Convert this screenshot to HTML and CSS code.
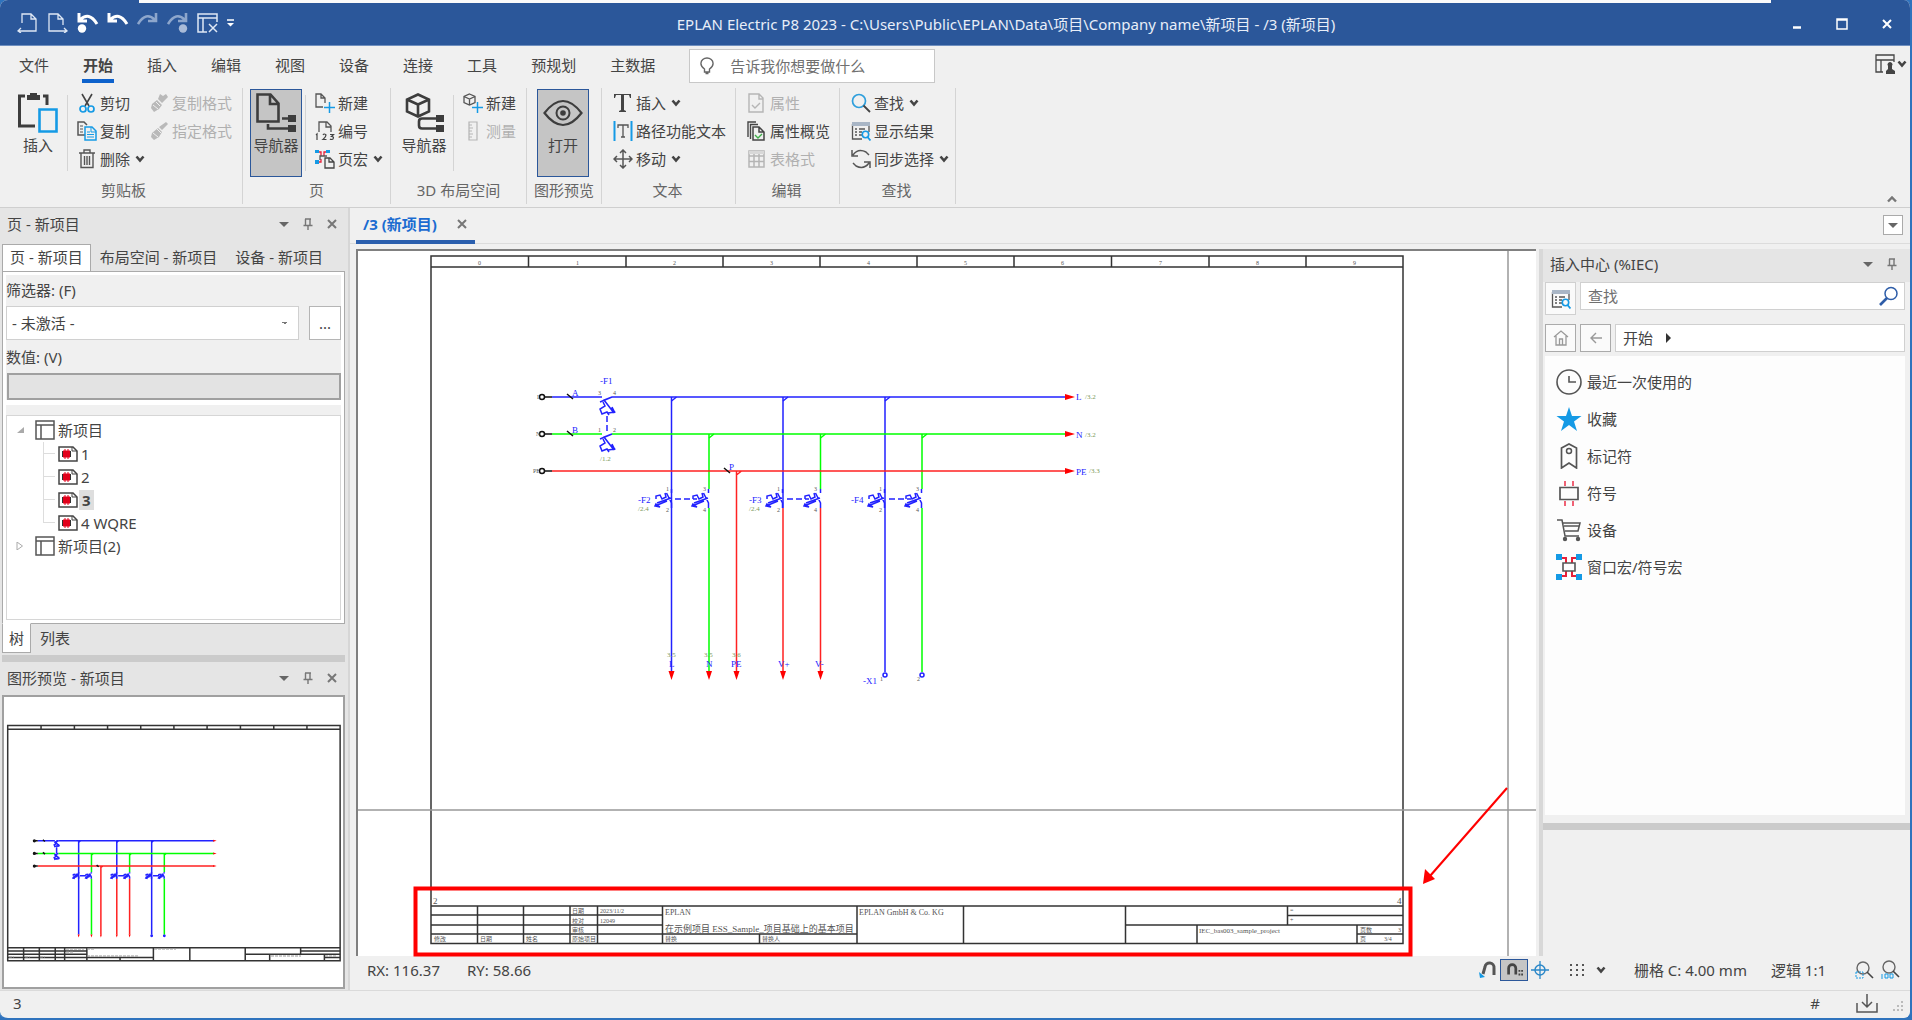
FILE: index.html
```html
<!DOCTYPE html>
<html lang="zh-CN">
<head>
<meta charset="utf-8">
<title>EPLAN Electric P8 2023</title>
<link rel="stylesheet" href="styles.css">
</head>
<body>
<svg class="defs" aria-hidden="true">
  <symbol id="i-chev" viewBox="0 0 10 10"><path d="M1.500 2.500L5 6.500 8.500 2.500" fill="none" stroke="#444" stroke-width="2.600"/></symbol>
  <symbol id="i-down" viewBox="0 0 12 12"><path d="M1 4h10L6 9z" fill="#666"/></symbol>
  <symbol id="i-pin" viewBox="0 0 12 12"><path d="M3.500 1v6M3 1h6M8 1v6M1.500 7.500h9M6 8v4" fill="none" stroke="#777" stroke-width="1.400"/></symbol>
  <symbol id="i-close" viewBox="0 0 12 12"><path d="M2 2l8 8M10 2l-8 8" fill="none" stroke="#777" stroke-width="2"/></symbol>
  <symbol id="i-layout" viewBox="0 0 20 20"><path d="M1 1h18v18H1zM1 5h18M6 5v14" fill="none" stroke="#555" stroke-width="1.500"/></symbol>
  <symbol id="i-page" viewBox="0 0 20 16"><path d="M1 1h14l4 4v10H1z" fill="#fff" stroke="#444" stroke-width="1.500"/><path d="M14 1v4h5" fill="none" stroke="#444"/><path d="M5 5h7v6H5z" fill="#e2001a" stroke="#e2001a"/><path d="M4.500 5v6M12.500 5v6" stroke="#333"/><path d="M7 3v10M10 3v10" stroke="#e2001a"/></symbol>
  <symbol id="i-cut" viewBox="0 0 20 20"><path d="M5 1l7 12M15 1L8 13" stroke="#444" stroke-width="1.600" fill="none"/><circle cx="6" cy="16" r="3" fill="none" stroke="#159ae5" stroke-width="1.700"/><circle cx="14" cy="16" r="3" fill="none" stroke="#159ae5" stroke-width="1.700"/></symbol>
  <symbol id="i-copy" viewBox="0 0 20 20"><path d="M8 14H1V1h6l3 3" fill="none" stroke="#555" stroke-width="1.500"/><path d="M3 5h3M3 8h3M3 11h3" stroke="#555"/><path d="M8 6h7l4 4v9H8z" fill="#f0f0f0" stroke="#159ae5" stroke-width="1.500"/><path d="M14 6v5h5M10 11h3M10 13.500h7M10 16h7" fill="none" stroke="#159ae5"/></symbol>
  <symbol id="i-trash" viewBox="0 0 20 20"><path d="M2 4h16M7 4V1h6v3M4 4v14.500h12V4M7.500 7v9M10 7v9M12.500 7v9" fill="none" stroke="#555" stroke-width="1.400"/></symbol>
  <symbol id="i-brush" viewBox="0 0 20 20"><path d="M17 1l2 2-6 6-3-3zM9 7l4 4-3 5-5 3-3-3 1-4z" fill="#b9b9b9"/><path d="M4 12l5 4M8 8l4 4" stroke="#f0f0f0"/></symbol>
  <symbol id="i-brush2" viewBox="0 0 20 20"><path d="M11 1l3 2 3-2 2 3-6 6-4-4zM8 7l5 5-3 4-5 3-3-4 1-4z" fill="#b9b9b9"/><path d="M4 12l5 4M7 9l4 4" stroke="#f0f0f0"/></symbol>
  <symbol id="i-newpage" viewBox="0 0 20 20"><path d="M8 14H1V1h5l4 4v5M6 1v4h4" fill="none" stroke="#555" stroke-width="1.300"/><path d="M14.500 9v11M9 14.500h11" stroke="#159ae5" stroke-width="1.500"/></symbol>
  <symbol id="i-num" viewBox="0 0 20 20"><path d="M4 11V1h8l4 4v6M11 1v5h5" fill="none" stroke="#555" stroke-width="1.300"/><path d="M1 14l1-1v6M8 14q1-2 3 0 0 2-3 4.500h3.500M15 13.500h3.500l-2 2q3 0 1.500 2.500-2 1-3 0" fill="none" stroke="#444" stroke-width="1.200"/></symbol>
  <symbol id="i-pmacro" viewBox="0 0 20 20"><path d="M0 1h4v3H0zM11 1h4v3h-4zM0 11h4v4H0z" fill="#159ae5"/><path d="M4 3h2v4M11 3H9v4M4 13h2v-3" fill="none" stroke="#e8203a" stroke-width="1.300"/><path d="M5 11V7h7" fill="none" stroke="#555" stroke-width="1.300"/><path d="M10 19V9h5l4 4v6zM14 9v4h5" fill="#f0f0f0" stroke="#444" stroke-width="1.300"/></symbol>
  <symbol id="i-cube" viewBox="0 0 20 20"><path d="M6.500 1L12 3.500v6L6.500 12 1 9.500v-6zM1 3.500l5.500 2.500L12 3.500M6.500 6v6" fill="none" stroke="#555" stroke-width="1.300"/><path d="M14.500 9v11M9 14.500h11" stroke="#159ae5" stroke-width="1.500"/></symbol>
  <symbol id="i-ruler" viewBox="0 0 20 20"><path d="M6 1h8v18H6zM6 4h3M6 7h4M6 10h3M6 13h4M6 16h3" fill="none" stroke="#b5b5b5" stroke-width="1.200"/></symbol>
  <symbol id="i-text" viewBox="0 0 20 20"><path d="M1 5V1h17v4h-1l-1-3h-5v15l2 1v1H6v-1l2-1V2H3L2 5z" fill="#444"/></symbol>
  <symbol id="i-path" viewBox="0 0 20 20"><path d="M1.500 0v20M18.500 0v20" stroke="#159ae5" stroke-width="2"/><path d="M5 7V4h10v3M10 4v12M8 16h4" fill="none" stroke="#555" stroke-width="1.300"/></symbol>
  <symbol id="i-move" viewBox="0 0 20 20"><path d="M10 1v18M1 10h18M7 4l3-3 3 3M7 16l3 3 3-3M4 7l-3 3 3 3M16 7l3 3-3 3" fill="none" stroke="#555" stroke-width="1.500"/></symbol>
  <symbol id="i-prop" viewBox="0 0 20 20"><path d="M2 1h10l4 4v14H2zM12 1v5h4M5 12l3 3 5-5" fill="none" stroke="#b5b5b5" stroke-width="1.400"/></symbol>
  <symbol id="i-props" viewBox="0 0 20 20"><path d="M1 16V1h8M3.500 18V3.500H11" fill="none" stroke="#444" stroke-width="1.400"/><path d="M6 19V6h6l5 5v8zM12 6v5h5" fill="#f0f0f0" stroke="#444" stroke-width="1.500"/><path d="M8 14l3 3 4-4" fill="none" stroke="#3fae49" stroke-width="1.400"/></symbol>
  <symbol id="i-table" viewBox="0 0 20 20"><path d="M2 2h15v16H2zM2 7h15M2 12.500h15M7 5v13M12 5v13" fill="none" stroke="#b5b5b5" stroke-width="1.500"/><path d="M2 2h15v3H2z" fill="#d8d8d8"/></symbol>
  <symbol id="i-find" viewBox="0 0 20 20"><circle cx="8" cy="8" r="6.500" fill="none" stroke="#2f9fdc" stroke-width="1.700"/><path d="M12.500 12.500L19 19" stroke="#444" stroke-width="1.800"/></symbol>
  <symbol id="i-result" viewBox="0 0 20 20"><path d="M1.500 3v15H11M18 3v8" fill="none" stroke="#555" stroke-width="1.300"/><path d="M1 1h18v4H1z" fill="#a9b6c6"/><path d="M4 8h2M4 11h2M4 14h2M8 8h6M8 11h3M8 14h3" stroke="#555" stroke-width="1.300"/><circle cx="14.500" cy="13.500" r="3.200" fill="none" stroke="#159ae5" stroke-width="1.600"/><path d="M16.500 16l3 3.500" stroke="#159ae5" stroke-width="1.800"/></symbol>
  <symbol id="i-sync" viewBox="0 0 20 20"><path d="M1 1v6h6M2 6q5-7 13-3l3 3M19 19v-6h-6M18 14q-5 7-13 3l-3-3" fill="none" stroke="#555" stroke-width="1.500"/></symbol>
</svg>

<div class="window">
  <header class="titlebar">
    <div class="quick">
      <button type="button" aria-label="上一页"><svg width="22" height="20" viewBox="0 0 22 20"><path d="M5 10V1h9l5 5v12H1M4 15l-3 3 3 2M14 1v5h5" fill="none" stroke="#dfe8f5" stroke-width="1.300"/></svg></button>
      <button type="button" aria-label="下一页"><svg width="22" height="20" viewBox="0 0 22 20"><path d="M16 12V6l-5-5H2v17h18M17 15l3 3-3 2M11 1v5h5" fill="none" stroke="#dfe8f5" stroke-width="1.300"/></svg></button>
      <button type="button" aria-label="撤销列表"><svg width="22" height="20" viewBox="0 0 22 20"><path d="M2 0v8h8M3 7q9-9 17 4" fill="none" stroke="#fff" stroke-width="3"/><circle cx="5" cy="15.500" r="4.200" fill="#fff"/></svg></button>
      <button type="button" aria-label="撤销"><svg width="22" height="20" viewBox="0 0 22 20"><path d="M2 0v8h8M3 7q9-9 17 4" fill="none" stroke="#fff" stroke-width="3"/></svg></button>
      <button type="button" aria-label="恢复" disabled><svg width="22" height="20" viewBox="0 0 22 20"><path d="M19 0v8h-8M18 7Q9-2 1 11" fill="none" stroke="#8da6cc" stroke-width="2.600"/></svg></button>
      <button type="button" aria-label="恢复列表" disabled><svg width="22" height="20" viewBox="0 0 22 20"><path d="M19 0v8h-8M18 7Q9-2 1 11" fill="none" stroke="#8da6cc" stroke-width="2.600"/><circle cx="16" cy="15.500" r="4.200" fill="#a9bbd8"/></svg></button>
      <button type="button" aria-label="重置布局"><svg width="22" height="20" viewBox="0 0 22 20"><path d="M20 9V1H1v18h9M1 5h19M6 5v14M12 11l8 8M20 11l-8 8" fill="none" stroke="#dfe8f5" stroke-width="1.500"/></svg></button>
      <button type="button" aria-label="更多"><svg width="8" height="8" viewBox="0 0 8 8"><path d="M0 1h7" stroke="#fff" stroke-width="1.500"/><path d="M0 4h7L3.500 7.500z" fill="#fff"/></svg></button>
    </div>
    <h1>EPLAN Electric P8 2023 - C:\Users\Public\EPLAN\Data\项目\Company name\新项目 - /3 (新项目)</h1>
    <div class="winbtns">
      <button type="button" aria-label="最小化"><svg width="12" height="12" viewBox="0 0 12 12"><path d="M2 9.500h8" stroke="#fff" stroke-width="2.500"/></svg></button>
      <button type="button" aria-label="最大化"><svg width="12" height="12" viewBox="0 0 12 12"><path d="M1 1h10v10H1zM1 2h10" fill="none" stroke="#fff" stroke-width="1.500"/></svg></button>
      <button type="button" aria-label="关闭"><svg width="12" height="12" viewBox="0 0 12 12"><path d="M2 2l8 8M10 2l-8 8" stroke="#fff" stroke-width="2"/></svg></button>
    </div>
  </header>

  <nav class="menu">
    <button type="button"><span>文件</span></button>
    <button type="button" class="on"><span>开始</span></button>
    <button type="button"><span>插入</span></button>
    <button type="button"><span>编辑</span></button>
    <button type="button"><span>视图</span></button>
    <button type="button"><span>设备</span></button>
    <button type="button"><span>连接</span></button>
    <button type="button"><span>工具</span></button>
    <button type="button"><span>预规划</span></button>
    <button type="button"><span>主数据</span></button>
    <label class="tell">
      <svg width="14" height="18" viewBox="0 0 14 18"><path d="M4.500 12q-4-3-3.500-6a6 5 0 0 1 12 0q.5 3-3.500 6v3h-5zM5.500 16.500h3" fill="none" stroke="#666" stroke-width="1.400"/></svg>
      <input type="text" placeholder="告诉我你想要做什么" aria-label="告诉我你想要做什么">
    </label>
    <button type="button" class="profile" aria-label="工作区域"><svg width="20" height="20" viewBox="0 0 20 20"><path d="M19 8V1H1v17h7M1 6h18M6 6v12" fill="none" stroke="#444" stroke-width="1.300"/><path d="M13 15v-3a2.500 2.500 0 1 1 4 0v3l3 2v3h-9v-3z" fill="#444"/></svg><svg width="10" height="10"><use href="#i-chev"/></svg></button>
  </nav>

  <section class="ribbon">
    <div class="group g-clip">
      <div class="tools">
        <button type="button" class="big"><svg width="40" height="40" viewBox="0 0 40 40"><path d="M7 3H1.500v30H17M25 3h4v9" fill="none" stroke="#3d3d3d" stroke-width="3"/><path d="M9 2h3V0h7v2h3v5H9z" fill="#3d3d3d"/><path d="M21.500 16.500h17v22h-17z" fill="#f0f0f0" stroke="#159ae5" stroke-width="2.600"/></svg>插入</button>
        <i class="sep"></i>
        <div class="col">
          <button type="button"><svg><use href="#i-cut"/></svg>剪切</button>
          <button type="button"><svg><use href="#i-copy"/></svg>复制</button>
          <button type="button"><svg><use href="#i-trash"/></svg>删除<svg class="c"><use href="#i-chev"/></svg></button>
        </div>
        <div class="col">
          <button type="button" disabled><svg><use href="#i-brush2"/></svg>复制格式</button>
          <button type="button" disabled><svg><use href="#i-brush"/></svg>指定格式</button>
        </div>
      </div>
      <div class="name">剪贴板</div>
    </div>
    <div class="group g-page">
      <div class="tools">
        <button type="button" class="big on"><svg width="40" height="40" viewBox="0 0 40 40"><path d="M1.500 1.500h13l8 9v18h-21zM14 1v10h9M26 25.500h8M12 31v4.500h20" fill="none" stroke="#3d3d3d" stroke-width="2.600"/><path d="M32 22h8v7h-8zM32 32h8v7h-8z" fill="#3d3d3d"/></svg>导航器</button>
        <i class="sep"></i>
        <div class="col">
          <button type="button"><svg><use href="#i-newpage"/></svg>新建</button>
          <button type="button"><svg><use href="#i-num"/></svg>编号</button>
          <button type="button"><svg><use href="#i-pmacro"/></svg>页宏<svg class="c"><use href="#i-chev"/></svg></button>
        </div>
      </div>
      <div class="name">页</div>
    </div>
    <div class="group g-3d">
      <div class="tools">
        <button type="button" class="big"><svg width="40" height="40" viewBox="0 0 40 40"><path d="M14 1.500l11 5v12l-11 5-11-5v-12zM3 6.500l11 5 11-5M14 11v12M32 25.500H18q-3 0-3 3v4q0 3 3 3h14" fill="none" stroke="#3d3d3d" stroke-width="2.600"/><path d="M32 22h8v7h-8zM32 32h8v7h-8z" fill="#3d3d3d"/></svg>导航器</button>
        <i class="sep"></i>
        <div class="col">
          <button type="button"><svg><use href="#i-cube"/></svg>新建</button>
          <button type="button" disabled><svg><use href="#i-ruler"/></svg>测量</button>
        </div>
      </div>
      <div class="name">3D 布局空间</div>
    </div>
    <div class="group g-prev">
      <div class="tools">
        <button type="button" class="big on"><svg width="40" height="40" viewBox="0 0 40 40"><path d="M1.500 20Q20-4 38.500 20 20 44 1.500 20z" fill="none" stroke="#3d3d3d" stroke-width="2.200"/><circle cx="20" cy="20" r="6.500" fill="none" stroke="#3d3d3d" stroke-width="2"/><circle cx="20" cy="20" r="2.800" fill="#3d3d3d"/></svg>打开</button>
      </div>
      <div class="name">图形预览</div>
    </div>
    <div class="group g-text">
      <div class="tools">
        <div class="col">
          <button type="button"><svg><use href="#i-text"/></svg>插入<svg class="c"><use href="#i-chev"/></svg></button>
          <button type="button"><svg><use href="#i-path"/></svg>路径功能文本</button>
          <button type="button"><svg><use href="#i-move"/></svg>移动<svg class="c"><use href="#i-chev"/></svg></button>
        </div>
      </div>
      <div class="name">文本</div>
    </div>
    <div class="group g-edit">
      <div class="tools">
        <div class="col">
          <button type="button" disabled><svg><use href="#i-prop"/></svg>属性</button>
          <button type="button"><svg><use href="#i-props"/></svg>属性概览</button>
          <button type="button" disabled><svg><use href="#i-table"/></svg>表格式</button>
        </div>
      </div>
      <div class="name">编辑</div>
    </div>
    <div class="group g-find">
      <div class="tools">
        <div class="col">
          <button type="button"><svg><use href="#i-find"/></svg>查找<svg class="c"><use href="#i-chev"/></svg></button>
          <button type="button"><svg><use href="#i-result"/></svg>显示结果</button>
          <button type="button"><svg><use href="#i-sync"/></svg>同步选择<svg class="c"><use href="#i-chev"/></svg></button>
        </div>
      </div>
      <div class="name">查找</div>
    </div>
    <button type="button" class="fold" aria-label="折叠功能区"><svg width="10" height="10" viewBox="0 0 10 10"><path d="M1 7.500L5 3.500 9 7.500" fill="none" stroke="#777" stroke-width="2.400"/></svg></button>
  </section>

  <main class="main">
    <aside class="left">
      <div class="ptitle"><h2>页 - 新项目</h2><button type="button" aria-label="菜单"><svg><use href="#i-down"/></svg></button><button type="button" aria-label="固定"><svg><use href="#i-pin"/></svg></button><button type="button" aria-label="关闭"><svg><use href="#i-close"/></svg></button></div>
      <div class="ptabs"><button type="button" class="on">页 - 新项目</button><button type="button">布局空间 - 新项目</button><button type="button">设备 - 新项目</button></div>
      <div class="pbody">
        <div class="filter">
          <label for="filter">筛选器: (F)</label>
          <div class="frow">
            <select id="filter"><option>- 未激活 -</option></select>
            <button type="button">...</button>
          </div>
          <label for="value">数值: (V)</label>
          <input id="value" type="text" readonly>
        </div>
        <div class="band"></div>
        <ul class="tree">
          <li class="proj"><svg class="ex" viewBox="0 0 8 8"><path d="M8 1v6H1z" fill="#aaa"/></svg><svg class="ic"><use href="#i-layout"/></svg><span>新项目</span></li>
          <li class="page"><svg class="ic"><use href="#i-page"/></svg><span>1</span></li>
          <li class="page"><svg class="ic"><use href="#i-page"/></svg><span>2</span></li>
          <li class="page"><svg class="ic"><use href="#i-page"/></svg><span class="cur">3</span></li>
          <li class="page last"><svg class="ic"><use href="#i-page"/></svg><span>4 WQRE</span></li>
          <li class="proj"><svg class="ex" viewBox="0 0 8 8"><path d="M1 0l5.500 4L1 8z" fill="none" stroke="#aaa"/></svg><svg class="ic"><use href="#i-layout"/></svg><span>新项目(2)</span></li>
        </ul>
      </div>
      <div class="btabs"><button type="button" class="on">树</button><button type="button">列表</button></div>
      <div class="split"></div>
      <div class="ptitle"><h2>图形预览 - 新项目</h2><button type="button" aria-label="菜单"><svg><use href="#i-down"/></svg></button><button type="button" aria-label="固定"><svg><use href="#i-pin"/></svg></button><button type="button" aria-label="关闭"><svg><use href="#i-close"/></svg></button></div>
      <div class="preview">
        <svg viewBox="5 698 339 290" preserveAspectRatio="xMidYMid meet">
          <use href="#sheet" transform="translate(-138.700 639) scale(.342)"/>
          <use href="#circuit" transform="translate(-150 706) scale(.342)"/>
          <path d="M67 950h18M67 953h8M88 950h8M88 957h52M155 950h22M272 957h30M326 957h12M10 958h5M26 958h5M41 958h5" stroke="#999" stroke-width="1" stroke-dasharray="3 1"/>
        </svg>
      </div>
    </aside>

    <section class="work">
      <div class="doctabs">
        <div class="doctab"><b>/3 (新项目)</b><button type="button" aria-label="关闭"><svg width="12" height="12"><use href="#i-close"/></svg></button></div>
        <button type="button" class="list" aria-label="页列表"><svg width="12" height="12"><use href="#i-down"/></svg></button>
      </div>
      <div class="desk">
        <div class="canvas">
          <svg viewBox="358 251 1178 705" preserveAspectRatio="xMidYMid meet">
            <g id="sheet" class="frame">
              <path d="M431 256h972v687.500H431zM431 267h972M528.500 256v11M626 256v11M723 256v11M820 256v11M917 256v11M1014 256v11M1111.500 256v11M1209 256v11M1306 256v11"/>
              <path d="M431 906h972M431 915h231.500M431 925h231.500M431 934h426M477.500 906v37.500M523.500 906v37.500M570 906v37.500M597.500 906v37.500M662.500 906v37.500M759.500 934v9.500M857 906v37.500M963.500 906v37.500M1125.500 906v37.500M1125.500 925h277.500M1287.500 906v19M1287.500 915.500h115.500M1197 925v18.500M1357 925v18.500M1357 934h46"/>
            </g>
            <g id="circuit">
              <g class="wire blue"><path d="M552 397h50M612 397h455M671.500 397v274M783 397v111M885 397v275M885 504v4"/><path d="M671.500 401l5-4M783 401l5-4M885 401l5-4"/></g>
              <g class="wire green"><path d="M552 434h50M612 434h455M709 434v55M820.500 434v55M922 434v55M709 508v163M922 508v164"/><path d="M709 438l5-4M820.500 438l5-4M922 438l5-4"/></g>
              <g class="wire red"><path d="M552 471h515M736.500 471v200M783 508v163M820.500 508v163M736.500 475l5-4"/></g>
              <g class="wire black"><path d="M544 397h8M544 434h8M544 471h8M567 394l6 5M567 431l6 5M724 468l6 5"/><circle cx="542" cy="397" r="2.500"/><circle cx="542" cy="434" r="2.500"/><circle cx="542" cy="471" r="2.500"/></g>
              <g class="wire blue">
                <path id="mcb" d="M600 402l12-5M612 397l-8 3 10 13M603 402l2 4-5 3 2 5 5-2 2 3M615 413l-3-6M608 413l7-1M611 408l4 4"/>
                <use href="#mcb" y="37"/>
                <path d="M607 416v17M675 499h22M787 499h22M889 499h22" stroke-dasharray="6 3"/>
                <g id="brk"><path d="M671.500 489v4M671.500 508v-5l-5-10M657 503l14-5M655 506l12-5M656 499v-3l4-1 2 4 4-2-1-4M656 504l4 3-5-1z"/></g>
                <use href="#brk" x="37"/><use href="#brk" x="111"/><use href="#brk" x="149"/><use href="#brk" x="213"/><use href="#brk" x="250"/>
                <circle cx="885" cy="675" r="2"/><circle cx="922" cy="675" r="2"/>
              </g>
              <path class="tip" d="M1065 394l10 3-10 3zM1065 431l10 3-10 3zM1065 468l10 3-10 3zM668.500 671l3 9 3-9zM706 671l3 9 3-9zM733.500 671l3 9 3-9zM780 671l3 9 3-9zM817.500 671l3 9 3-9z"/>
            </g>
            <g class="t6 gray">
              <text x="478" y="265">0</text><text x="576" y="265">1</text><text x="673" y="265">2</text><text x="770" y="265">3</text><text x="867" y="265">4</text><text x="964" y="265">5</text><text x="1061" y="265">6</text><text x="1159" y="265">7</text><text x="1256" y="265">8</text><text x="1353" y="265">9</text>
              <text x="537" y="399">L</text><text x="536" y="436">N</text><text x="533" y="473">PE</text>
              <text x="598" y="395">3</text><text x="613" y="395">4</text><text x="598" y="432">1</text><text x="613" y="432">2</text>
              <text x="666" y="491">1</text><text x="666" y="512">2</text><text x="703" y="491">3</text><text x="703" y="512">4</text><text x="777" y="491">1</text><text x="777" y="512">2</text><text x="814" y="491">3</text><text x="814" y="512">4</text><text x="879" y="491">1</text><text x="879" y="512">2</text><text x="916" y="491">3</text><text x="916" y="512">4</text>
              <text x="880" y="681">1</text><text x="917" y="681">2</text>
              <text x="434" y="941">修改</text><text x="480" y="941">日期</text><text x="526" y="941">姓名</text><text x="572" y="941">原始项目</text><text x="572" y="913">日期</text><text x="572" y="923">校对</text><text x="572" y="932">审核</text>
              <text x="600" y="913">2023/11/2</text><text x="600" y="923">12049</text><text x="665" y="941">替换</text><text x="762" y="941">替换人</text>
              <text x="1290" y="912">=</text><text x="1290" y="922">+</text><text x="1360" y="932">页数</text><text x="1398" y="932">3</text><text x="1360" y="941">页</text><text x="1384" y="941">3/4</text>
            </g>
            <g class="t7 gray"><text x="1199" y="933">IEC_bas003_sample_project</text></g>
            <g class="t9 gray"><text x="433" y="904">2</text><text x="1397" y="904">4</text><text x="665" y="932">在示例项目 ESS_Sample_项目基础上的基本项目</text></g>
            <g class="t8 gray"><text x="665" y="915">EPLAN</text><text x="859" y="915">EPLAN GmbH &amp; Co. KG</text></g>
            <g class="t9 lbl"><text x="600" y="384">-F1</text><text x="572" y="396">A</text><text x="572" y="433">B</text><text x="729" y="470">P</text><text x="638" y="503">-F2</text><text x="749" y="503">-F3</text><text x="851" y="503">-F4</text><text x="863" y="684">-X1</text><text x="669" y="667">L</text><text x="706" y="667">N</text><text x="731" y="667">PE</text><text x="778" y="667">V+</text><text x="815" y="667">V-</text><text x="1076" y="400">L</text><text x="1076" y="438">N</text><text x="1076" y="475">PE</text></g>
            <g class="t7 ref"><text x="600" y="461">/1.2</text><text x="638" y="511">/2.4</text><text x="749" y="511">/2.4</text><text x="667" y="657">3.5</text><text x="704" y="657">3.5</text><text x="732" y="657">3.6</text><text x="1085" y="399">/3.2</text><text x="1085" y="437">/3.2</text><text x="1089" y="473">/3.3</text></g>
            <path class="cross" d="M358 810h1178M1508 251v705"/>
            <path d="M1507 788L1430 876" stroke="#f00" stroke-width="2"/><path d="M1423 884l2-15 10 10z" fill="#f00"/>
            <path d="M415.500 888.500h995v66h-995z" fill="none" stroke="#f00" stroke-width="4"/>
          </svg>
        </div>
        <aside class="center">
          <div class="ptitle"><h2>插入中心 (%IEC)</h2><button type="button" aria-label="菜单"><svg><use href="#i-down"/></svg></button><button type="button" aria-label="固定"><svg><use href="#i-pin"/></svg></button></div>
          <div class="srow">
            <button type="button" class="view" aria-label="显示结果"><svg width="20" height="20"><use href="#i-result"/></svg></button>
            <label class="find"><input type="text" placeholder="查找" aria-label="查找"><svg width="20" height="20" viewBox="0 0 20 20"><circle cx="12" cy="7.500" r="6" fill="none" stroke="#2e5da8" stroke-width="1.500"/><path d="M8 12l-7 7" stroke="#2e5da8" stroke-width="2.600"/></svg></label>
          </div>
          <div class="srow nav">
            <button type="button" aria-label="主页"><svg width="16" height="16" viewBox="0 0 16 16"><path d="M1 7l7-6 7 6M3 6v9h10V6M6.500 15V9h3v6" fill="none" stroke="#999" stroke-width="1.300"/></svg></button>
            <button type="button" aria-label="返回"><svg width="16" height="16" viewBox="0 0 16 16"><path d="M3 8h11M8 3L3 8l5 5" fill="none" stroke="#999" stroke-width="1.400"/></svg></button>
            <div class="crumb">开始<svg width="8" height="10" viewBox="0 0 8 10"><path d="M1 0v10l5-5z" fill="#333"/></svg></div>
          </div>
          <ul class="items">
            <li><svg viewBox="0 0 26 26"><circle cx="13" cy="13" r="12" fill="none" stroke="#555" stroke-width="1.600"/><path d="M13 7v6h7" fill="none" stroke="#555" stroke-width="1.600"/></svg>最近一次使用的</li>
            <li><svg viewBox="0 0 26 26"><path d="M13 1l3 9h9.500L18 15.500 21 25l-8-6-8 6 3-9.500L.5 10H10z" fill="#159ae5"/></svg>收藏</li>
            <li><svg viewBox="0 0 26 26"><path d="M5.500 25V5L13 1l7.500 4v20L13 20z" fill="none" stroke="#555" stroke-width="1.700"/><circle cx="13" cy="8" r="2.500" fill="none" stroke="#555" stroke-width="1.500"/></svg>标记符</li>
            <li><svg viewBox="0 0 26 26"><path d="M4 7.500h18v12H4z" fill="none" stroke="#555" stroke-width="1.700"/><path d="M9 1v5M17 1v5M9 21v5M17 21v5" stroke="#e8203a" stroke-width="1.400"/></svg>符号</li>
            <li><svg viewBox="0 0 26 26"><path d="M1 3h5l3 16h14M7 6h17l-2 8H9M8 9h15" fill="none" stroke="#555" stroke-width="1.500"/><circle cx="9" cy="22" r="2.200" fill="#555"/><circle cx="22" cy="22" r="2.200" fill="#555"/></svg>设备</li>
            <li><svg viewBox="0 0 26 26"><path d="M6 4h4v5M20 4h-4v5M6 22h4v-5M20 22h-4v-5" fill="none" stroke="#e8203a" stroke-width="2"/><path d="M7 9h12v8H7z" fill="none" stroke="#555" stroke-width="1.600"/><path d="M0 0h6v6H0zM20 0h6v6h-6zM0 20h6v6H0zM20 20h6v6h-6z" fill="#159ae5"/></svg>窗口宏/符号宏</li>
          </ul>
          <div class="split"></div>
          <div class="info"></div>
        </aside>
      </div>
      <div class="coords">
        <span class="rx">RX: 116.37</span><span>RY: 58.66</span>
        <div class="snap">
          <button type="button" aria-label="捕捉"><svg width="18" height="18" viewBox="0 0 18 18"><path d="M4 13l2-7a4 4 0 0 1 9 1v7" fill="none" stroke="#555" stroke-width="3"/><path d="M0 11l6 5-5 1z" fill="#159ae5"/></svg></button>
          <button type="button" class="on" aria-label="捕捉到栅格"><svg width="18" height="18" viewBox="0 0 20 18"><path d="M4 14V7a4 4 0 0 1 8 0v7" fill="none" stroke="#444" stroke-width="3"/><path d="M15 9h2v2h-2zM15 13h2v2h-2zM18 9h2v2h-2zM18 13h2v2h-2z" fill="#444"/></svg></button>
          <button type="button" aria-label="对象捕捉"><svg width="18" height="18" viewBox="0 0 18 18"><circle cx="9" cy="9" r="5" fill="none" stroke="#2a87c8" stroke-width="1.400"/><path d="M9 0v18M0 9h18" stroke="#2a87c8" stroke-width="1.300"/></svg></button>
          <button type="button" class="grid" aria-label="栅格"><svg width="14" height="14" viewBox="0 0 14 14"><path d="M0 2h14M0 7h14M0 12h14" stroke="#555" stroke-width="2" stroke-dasharray="2 4"/></svg><svg width="10" height="10"><use href="#i-chev"/></svg></button>
        </div>
        <span class="gridsize">栅格 C: 4.00 mm</span><span class="logic">逻辑 1:1</span>
        <button type="button" aria-label="缩放窗口"><svg width="20" height="20" viewBox="0 0 20 20"><circle cx="9" cy="8" r="6" fill="none" stroke="#666" stroke-width="1.400"/><path d="M13 12l6 6" stroke="#444" stroke-width="1.600"/><path d="M2 12h7v6H2z" fill="none" stroke="#159ae5" stroke-dasharray="2 1"/></svg></button>
        <button type="button" aria-label="缩放 100%"><svg width="20" height="20" viewBox="0 0 20 20"><circle cx="9" cy="7" r="6" fill="none" stroke="#666" stroke-width="1.400"/><path d="M13 11l6 6" stroke="#444" stroke-width="1.600"/><path d="M2 14v5M5 14h3v4H5zM10 14h3v4h-3z" fill="none" stroke="#159ae5"/></svg></button>
      </div>
    </section>
  </main>

  <footer class="status"><span>3</span><span class="hash">#</span>
    <svg width="22" height="20" viewBox="0 0 22 20"><path d="M1 10v9h20v-9M11 1v13M6 9l5 5 5-5" fill="none" stroke="#555" stroke-width="1.500"/></svg>
    <svg width="12" height="12" viewBox="0 0 12 12"><path d="M9 1h2v2H9zM5 5h2v2H5zM9 5h2v2H9zM1 9h2v2H1zM5 9h2v2H5zM9 9h2v2H9z" fill="#bbb"/></svg>
  </footer>
</div>
</body>
</html>
```
FILE: styles.css
```css
* { box-sizing: border-box; }
body {
  margin: 0;
  background: #2f73bd;
  color: #444;
  font: 15px/20px "Noto Sans", "Noto Sans CJK SC", sans-serif;
}
.defs { position: absolute; width: 0; height: 0; }
button, input, select {
  margin: 0;
  padding: 0;
  border: 0;
  background: none;
  color: inherit;
  font: inherit;
}
button svg, li svg { flex: none; display: block; }
h1, h2 { margin: 0; font-size: 15px; font-weight: 400; }
ul { margin: 0; padding: 0; list-style: none; }

.window {
  display: flex;
  flex-direction: column;
  min-height: 100vh;
  border-right: 2px solid #2f73bd;
  border-bottom: 2px solid #2f73bd;
  border-radius: 8px;
  background: #f0f0f0;
  overflow: hidden;
}

/* title bar */
.titlebar {
  position: relative;
  display: flex;
  align-items: center;
  height: 46px;
  padding: 3px 17px 0 17px;
  border-bottom: 1px solid #6f8fbf;
  background: #2b579a;
  color: #e8eef8;
}
.titlebar h1 { flex: 1; padding-right: 14px; text-align: center; }
.titlebar::before {
  content: "";
  position: absolute;
  top: 0;
  left: 139px;
  right: 139px;
  height: 3px;
  background: #fafafa;
}
.quick { display: flex; align-items: center; gap: 8px; padding-bottom: 3px; }
.winbtns { display: flex; justify-content: flex-end; gap: 33px; }

/* menu */
.menu { display: flex; align-items: flex-start; height: 42px; padding: 0 3px 0 2px; }
.menu > button { padding: 6px 16px 0; }
.menu > button span { display: block; padding: 0 1px; line-height: 27px; border-bottom: 4px solid transparent; }
.menu .on { font-weight: 700; }
.menu .on span { border-color: #0e62cc; }
.tell {
  display: flex;
  align-items: center;
  gap: 16px;
  width: 246px;
  height: 34px;
  margin: 3px 0 0 17px;
  padding-left: 10px;
  border: 1px solid #c8c8c8;
  background: #fff;
}
.tell input { flex: 1; min-width: 0; }
input { outline: 0; }
input::placeholder { color: #707070; opacity: 1; }
.menu > .profile { display: flex; align-items: center; gap: 2px; margin-left: auto; padding: 8px 0 0; }

/* ribbon */
.ribbon { display: flex; height: 120px; border-bottom: 1px solid #cfcfcf; padding-left: 2px; }
.group { display: flex; flex-direction: column; height: 116px; padding: 1px 0 0 7px; border-right: 1px solid #d4d4d4; }
.tools { display: flex; height: 88px; }
.name { margin-left: -7px; line-height: 26px; text-align: center; color: #666; }
.g-clip { width: 241px; padding-left: 10px; }
.g-page { width: 148px; }
.g-3d { width: 136px; }
.g-prev { width: 75px; padding-left: 10px; }
.g-prev .name { margin-left: -10px; }
.g-text { width: 134px; padding-left: 5px; }
.g-edit { width: 104px; padding-left: 5px; }
.g-find { width: 116px; padding-left: 5px; }
.big { display: flex; flex-direction: column; align-items: center; gap: 2px; width: 52px; height: 88px; padding-top: 3px; line-height: 20px; white-space: nowrap; border: 1px solid transparent; }
.big.on { border-color: #2b579a; background: #c5c5c5; }
.sep { width: 1px; height: 76px; margin: 6px 3px 0; background: #d4d4d4; }
.col { display: flex; flex-direction: column; padding-left: 6px; }
.col + .col { padding-left: 4px; }
.col button { display: flex; align-items: center; gap: 3px; height: 28px; white-space: nowrap; }
.col svg { width: 20px; height: 20px; }
.col svg.c { width: 10px; height: 10px; margin-left: 2px; }
.col button:disabled { color: #b0b0b0; }
.fold { align-self: flex-end; margin: 0 13px 3px auto; }

/* docked panels */
.main { display: flex; flex: 1; min-height: 0; }
.left { display: flex; flex-direction: column; width: 350px; padding: 0 3px 1px 2px; background: #e5e5e5; border-right: 2px solid #d6d6d6; }
.ptitle { display: flex; align-items: center; gap: 12px; height: 33px; padding: 0 7px 2px 5px; }
.ptitle h2 { flex: 1; }
.ptitle svg { width: 12px; height: 12px; }
.ptabs { display: flex; height: 31px; padding-top: 3px; margin-bottom: -1px; }
.ptabs button { padding: 0 8px 3px; white-space: nowrap; border: 1px solid transparent; }
.ptabs .on { padding: 0 7px 2px; border-color: #aaa #aaa #fff; background: #fff; }
.pbody { display: flex; flex: 1; flex-direction: column; padding: 3px; border: 1px solid #aaa; background: #fff; }
.filter { display: flex; flex-direction: column; padding-top: 4px; background: #f0f0f0; }
.filter label { height: 27px; line-height: 22px; }
.frow { display: flex; gap: 10px; height: 40px; padding-bottom: 6px; }
.frow select {
  flex: 1;
  padding: 0 5px;
  border: 1px solid #d0d0d0;
  border-radius: 0;
  appearance: none;
  background: linear-gradient(45deg, transparent 50%, #777 50%) right 13px center / 3px 3px no-repeat,
    linear-gradient(-45deg, transparent 50%, #777 50%) right 10px center / 3px 3px no-repeat, #fff;
}
.frow button { width: 32px; border: 1px solid #b5b5b5; background: #fff; }
.filter input { height: 27px; margin: 0 0 0 1px; border: 2px solid #a0a0a0; background: #e3e3e3; }
.band { height: 10px; margin-top: 5px; background: #f0f0f0; }
.tree { flex: 1; padding-top: 2px; border: 1px solid #d6d6d6; }
.tree li { display: flex; align-items: center; gap: 3px; height: 23px; }
.tree .proj { height: 24px; padding-left: 9px; }
.ex { width: 8px; height: 8px; margin-right: 8px; }
.ic { width: 20px; height: 20px; }
.page { padding-left: 51px; background: linear-gradient(#ddd, #ddd) 36px 0 / 1px 100% no-repeat, linear-gradient(#ddd, #ddd) 36px 50% / 12px 1px no-repeat; }
.page.last { background-size: 1px 50%, 12px 1px; }
.page .ic { height: 16px; }
.cur { margin: 0 -2px; padding: 0 3px; background: #dedede; font-weight: 700; }
.btabs { display: flex; height: 30px; margin-top: -1px; }
.btabs button { padding: 0 9px; }
.btabs .on { padding: 0 6px; border: 1px solid #aaa; border-top-color: #fff; background: #fff; }
.split { height: 7px; background: #cbcbcb; }
.btabs + .split { margin-top: 2px; }
.preview { height: 294px; border: 2px solid #a0a0a0; background: #fff; }
.preview svg { display: block; width: 100%; height: 100%; }

/* drawing area */
.work { display: flex; flex: 1; flex-direction: column; min-width: 0; }
.doctabs { display: flex; align-items: flex-start; justify-content: space-between; height: 36px; margin-bottom: 5px; padding: 0 7px 0 6px; border-bottom: 1px solid #dcdcdc; }
.doctab { display: flex; align-items: center; gap: 19px; height: 36px; padding: 0 7px; border-bottom: 4px solid #2b5fae; color: #1a6bd0; }
.doctab b { font-weight: 700; }
.list { margin-top: 7px; padding: 2px; border: 1px solid #aaa; background: #fff; }
.list svg { margin: 1px; }
.desk { display: flex; flex: 1; min-height: 0; }
.canvas { position: relative; flex: 1; min-width: 0; margin: 0 3px 0 6px; border: 1px solid #808080; border-width: 2px 0 0 2px; background: #fff; }
.canvas svg { position: absolute; inset: 0; width: 100%; height: 100%; overflow: visible; }
.frame path { fill: none; stroke: #333; stroke-width: 1.5px; vector-effect: non-scaling-stroke; }
.wire path, .wire circle { fill: none; stroke-width: 1.5px; vector-effect: non-scaling-stroke; }
.blue { stroke: #22f; }
.green { stroke: #0f0; }
.red { stroke: #f22; }
.black { stroke: #111; }
.tip { fill: #f00; }
.cross { fill: none; stroke: #999; stroke-width: 1.5px; }
.canvas text { font-family: "Liberation Serif", "Noto Sans CJK SC", serif; }
.t6 { font-size: 6px; }
.t7 { font-size: 7px; }
.t8 { font-size: 8px; }
.t9 { font-size: 9px; }
.gray { fill: #555; }
.lbl { fill: #22f; }
.ref { fill: #7a9a5a; }

/* insert centre */
.center { display: flex; flex-direction: column; width: 371px; padding: 0 5px 0 2px; border-left: 4px solid #d8d8d8; background: #f0f0f0; }
.center .ptitle { margin: 0 -5px 0 -2px; padding: 0 12px 4px 7px; background: #e5e5e5; }
.srow { display: flex; gap: 4px; height: 42px; align-items: flex-start; }
.srow button { display: flex; align-items: center; justify-content: center; width: 31px; height: 28px; border: 1px solid #aaa; background: #fafafa; }
.srow .view { height: 33px; border-color: #d0d0d0; }
.srow.nav { height: 32px; }
.find, .crumb { display: flex; flex: 1; align-items: center; height: 28px; padding: 0 5px 0 7px; border: 1px solid #d0d0d0; background: #fff; }
.find input { flex: 1; min-width: 0; }
.crumb { gap: 12px; }
.items { flex: 1; padding: 7px 0 0 11px; background: #fdfdfd; }
.items li { display: flex; align-items: center; gap: 5px; height: 37px; }
.items svg { width: 26px; height: 26px; }
.center .split { margin: 8px -5px 0 -2px; }
.info { height: 126px; }

/* status rows */
.coords { display: flex; align-items: center; height: 34px; padding: 0 10px 6px 17px; }
.rx { width: 100px; }
.snap { display: flex; align-items: center; gap: 3px; margin-left: auto; }
.snap button { display: flex; align-items: center; gap: 12px; padding: 1px 0; }
.snap .on { padding: 1px 4px; border: 1px solid #2b579a; background: #c5c5c5; }
.snap .grid { margin-left: 18px; }
.gridsize { margin-left: 28px; }
.logic { margin: 0 28px 0 24px; }
.coords > button + button { margin-left: 6px; }
.coords > button svg { display: block; }
.status { display: flex; align-items: center; height: 28px; padding: 0 6px 3px 13px; border-top: 1px solid #dadada; }
.hash { margin: 0 36px 0 auto; }
.status svg + svg { margin: 6px 0 0 14px; }
```
